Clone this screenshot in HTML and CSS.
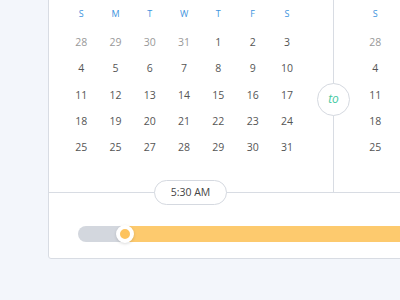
FILE: index.html
```html
<!DOCTYPE html>
<html lang="en">
<head>
    <meta charset="UTF-8">
    <title>Date range picker</title>
    <link rel="stylesheet" href="styles.css">
</head>
<body>

<div class="card">
    <div class="ranges">
        <div class="calendar calendar-start">
            <div class="weekdays">
                <span>S</span><span>M</span><span>T</span><span>W</span><span>T</span><span>F</span><span>S</span>
            </div>
            <div class="days">
                <span class="muted">28</span><span class="muted">29</span><span class="muted">30</span><span class="muted">31</span><span>1</span><span>2</span><span>3</span>
                <span>4</span><span>5</span><span>6</span><span>7</span><span>8</span><span>9</span><span>10</span>
                <span>11</span><span>12</span><span>13</span><span>14</span><span>15</span><span>16</span><span>17</span>
                <span>18</span><span>19</span><span>20</span><span>21</span><span>22</span><span>23</span><span>24</span>
                <span>25</span><span>25</span><span>27</span><span>28</span><span>29</span><span>30</span><span>31</span>
            </div>
        </div>

        <div class="separator">
            <span class="to">to</span>
        </div>

        <div class="calendar calendar-end">
            <div class="weekdays">
                <span>S</span>
            </div>
            <div class="days">
                <span class="muted">28</span>
                <span>4</span>
                <span>11</span>
                <span>18</span>
                <span>25</span>
            </div>
        </div>
    </div>

    <div class="time">
        <div class="time-label">5:30 AM</div>
        <div class="slider">
            <span class="slider-empty"></span>
            <span class="slider-fill"></span>
            <span class="slider-knob"></span>
        </div>
    </div>
</div>

</body>
</html>
```

FILE: styles.css
```css
body {
    margin: 0;
    background-color: #f3f6fb;
    font-family: "Open Sans", Arial, sans-serif;
    color: #555;
    overflow: hidden;
}
.card {
    margin: -10px 0 0 48px;
    width: 600px;
    background-color: #fff;
    border: 1px solid #d8dce3;
    border-radius: 3px;
}
.ranges {
    display: flex;
    height: 201px;
}
.calendar {
    flex-shrink: 0;
    padding-top: 15px;
}
.calendar-start {
    width: 269px;
    padding-left: 15px;
}
.calendar-end {
    padding-left: 24px;
}
.weekdays, .days {
    display: grid;
    grid-template-columns: repeat(7, 34.3px);
    text-align: center;
}
.calendar-end .weekdays,
.calendar-end .days {
    grid-template-columns: 34.3px;
}
.weekdays {
    height: 16px;
    line-height: 16px;
    font-size: 9px;
    color: #3d94de;
    margin-bottom: 7px;
}
.days {
    grid-auto-rows: 26.3px;
    line-height: 26.3px;
    font-size: 10.5px;
    color: #555;
}
.days .muted {
    color: #999;
}
.separator {
    position: relative;
    flex-shrink: 0;
    border-left: 1px solid #d8dce3;
}
.to {
    position: absolute;
    top: 92px;
    left: -17px;
    width: 31px;
    height: 31px;
    line-height: 30px;
    border: 1px solid #d5d9e0;
    border-radius: 50%;
    background-color: #fff;
    text-align: center;
    font-style: italic;
    font-size: 12px;
    color: #45c9a1;
}
.time {
    border-top: 1px solid #d8dce3;
    padding: 0 0 16px 29px;
}
.time-label {
    width: 71px;
    height: 23px;
    line-height: 23px;
    margin: -13px 0 0 76px;
    border: 1px solid #d5d9e0;
    border-radius: 13px;
    background-color: #fff;
    text-align: center;
    font-size: 10.5px;
    color: #444;
}
.slider {
    position: relative;
    display: flex;
    height: 16px;
    margin-top: 21px;
}
.slider-empty {
    width: 47px;
    background-color: #d3d7de;
    border-radius: 8px 0 0 8px;
}
.slider-fill {
    flex: 1;
    background-color: #fdca6e;
}
.slider-knob {
    position: absolute;
    top: -1px;
    left: 38px;
    width: 10px;
    height: 10px;
    border: 4px solid #fff;
    border-radius: 50%;
    background-color: #fdc35e;
    box-shadow: 0 1px 3px rgba(0, 0, 0, 0.15);
}
```
